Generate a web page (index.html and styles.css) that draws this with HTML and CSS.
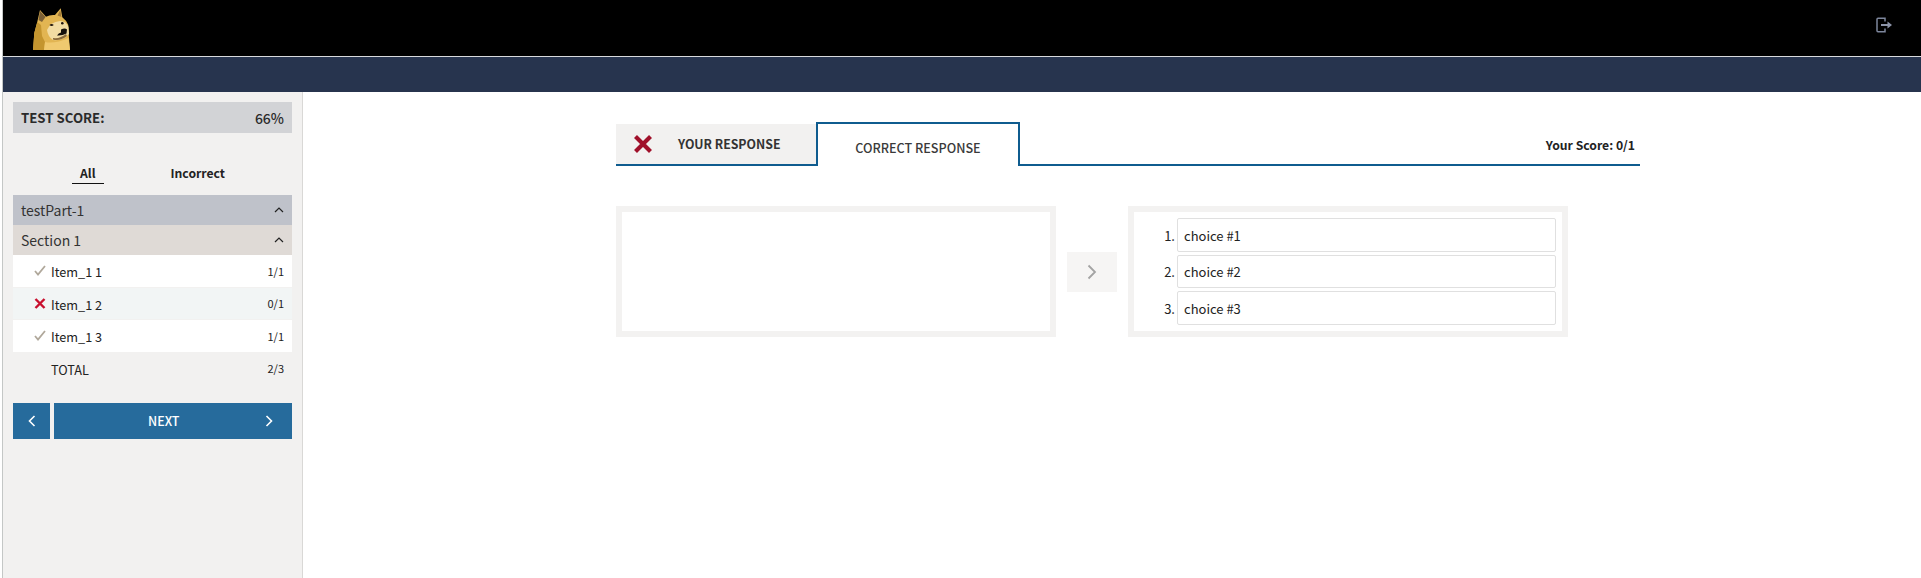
FILE: index.html
```html
<!doctype html>
<html>
<head>
<meta charset="utf-8">
<link rel="stylesheet" href="styles.css">
<title>Test review</title>
</head>
<body>
<header class="topbar">
    <svg class="logo" viewBox="33 8 38 42" width="38" height="42">
        <path d="M33 50 L34.300 33 L37.300 21.700 L40 10 L46 16.700 Q50 14.500 55 15 L60.700 8.300 L62.300 17.300 Q66.500 20.500 68.300 25 L68.600 30 L69 38 L70 50 Z" fill="#e2b552"/>
        <path d="M33 50 L34.300 33 L37.300 22 L41 25 L42 36 L45 42 L44 50 Z" fill="#c4952f"/>
        <path d="M40 11 L45.500 17 L42 22 L38.500 20 Z" fill="#7c6036"/>
        <path d="M60.300 10 L61.500 17 L57.500 15.500 Z" fill="#a27a38"/>
        <path d="M45 42 Q55 44 68.500 38 L70 50 L44 50 Z" fill="#f0c96f"/>
        <path d="M47 30 Q50 22 60 21 Q66 21 68.500 27 L69 34 Q63 41 53 40 Q48 37 47 30 Z" fill="#f2dca3"/>
        <path d="M53 38 Q60 39 66 34 L67 36 Q60 41.500 53 39.500 Z" fill="#8a6a3a"/>
        <path d="M49.500 25 Q51.500 23 53.800 25 Q51.500 27 49.500 25 Z" fill="#1e140c"/>
        <circle cx="62.300" cy="23.300" r="1.300" fill="#1e140c"/>
        <path d="M61 29.500 Q65 27.500 67 29.500 L66.500 33.500 Q62 36 57 35.500 Q58.500 33 61 32.500 Z" fill="#15100c"/>
    </svg>
    <svg class="logout" viewBox="0 0 16 16" width="16" height="16">
        <path d="M9 4.500 V1.200 H2 Q1 1.200 1 2.200 V13.800 Q1 14.800 2 14.800 H9 V11.500" fill="none" stroke="#7d869c" stroke-width="1.500"/>
        <path d="M5 8 H12" stroke="#8d95a9" stroke-width="2"/>
        <path d="M11.500 4.600 L16 8 L11.500 11.400 Z" fill="#8d95a9"/>
    </svg>
</header>
<div class="subbar"></div>

<div class="page">
    <aside class="sidebar">
        <div class="test-score"><span>TEST SCORE:</span><span class="pct">66%</span></div>

        <div class="filters">
            <span class="filter active">All</span>
            <span class="filter">Incorrect</span>
        </div>

        <div class="part-row">testPart-1
            <svg class="caret" viewBox="0 0 10 6" width="10" height="6"><path d="M1 5 L5 1 L9 5" fill="none" stroke="#222" stroke-width="1.200"/></svg>
        </div>
        <div class="section-row">Section 1
            <svg class="caret" viewBox="0 0 10 6" width="10" height="6"><path d="M1 5 L5 1 L9 5" fill="none" stroke="#222" stroke-width="1.200"/></svg>
        </div>

        <div class="item">
            <svg class="mark" viewBox="0 0 12 11" width="12" height="11"><path d="M1 6 L4 9.500 L11 1" fill="none" stroke="#b0a89b" stroke-width="1.800"/></svg>
            <span class="item-name">Item_1 1</span><span class="item-score">1/1</span>
        </div>
        <div class="item wrong">
            <svg class="mark" viewBox="0 0 12 11" width="12" height="11"><path d="M1.500 1 L10.500 10 M10.500 1 L1.500 10" fill="none" stroke="#c8102e" stroke-width="2.400"/></svg>
            <span class="item-name">Item_1 2</span><span class="item-score">0/1</span>
        </div>
        <div class="item">
            <svg class="mark" viewBox="0 0 12 11" width="12" height="11"><path d="M1 6 L4 9.500 L11 1" fill="none" stroke="#b0a89b" stroke-width="1.800"/></svg>
            <span class="item-name">Item_1 3</span><span class="item-score">1/1</span>
        </div>
        <div class="item total">
            <span class="mark"></span>
            <span class="item-name">TOTAL</span><span class="item-score">2/3</span>
        </div>

        <div class="nav-buttons">
            <div class="btn btn-prev">
                <svg viewBox="0 0 8 12" width="8" height="12"><path d="M6.500 1 L1.500 6 L6.500 11" fill="none" stroke="#fff" stroke-width="1.600"/></svg>
            </div>
            <div class="btn btn-next">
                <span>NEXT</span>
                <svg viewBox="0 0 8 12" width="8" height="12"><path d="M1.500 1 L6.500 6 L1.500 11" fill="none" stroke="#fff" stroke-width="1.600"/></svg>
            </div>
        </div>
    </aside>

    <main class="content">
        <div class="tabs">
            <div class="tab tab-yours">
                <svg viewBox="0 0 20 20" width="20" height="20"><path d="M2.500 2.500 L17.500 17.500 M17.500 2.500 L2.500 17.500" fill="none" stroke="#a0102a" stroke-width="4.200"/></svg>
                <span>YOUR RESPONSE</span>
            </div>
            <div class="tab tab-correct">CORRECT RESPONSE</div>
            <div class="your-score">Your Score: 0/1</div>
        </div>

        <div class="order">
            <div class="box"></div>
            <div class="arrow">
                <svg viewBox="0 0 10 16" width="10" height="16"><path d="M1.500 1.500 L8 8 L1.500 14.500" fill="none" stroke="#a3a3a3" stroke-width="1.800"/></svg>
            </div>
            <ol class="box choices">
                <li class="choice"><span class="num">1.</span><span class="choice-text">choice #1</span></li>
                <li class="choice"><span class="num">2.</span><span class="choice-text">choice #2</span></li>
                <li class="choice"><span class="num">3.</span><span class="choice-text">choice #3</span></li>
            </ol>
        </div>
    </main>
</div>
</body>
</html>
```

FILE: styles.css
```css
* {
    box-sizing: border-box;
}
html,
body {
    margin: 0;
    padding: 0;
    height: 100%;
}
body {
    font-family: "Noto Sans CJK SC", "Noto Sans", "Liberation Sans", sans-serif;
    font-size: 14px;
    color: #222;
    background-color: white;
    border-left: 1px solid #c4c7c6;
    margin-left: 2px;
    overflow: hidden;
}

.topbar {
    height: 56px;
    background-color: #000;
    display: flex;
    align-items: flex-start;
    justify-content: space-between;
    padding: 8px 0 0 30px;
}
.logout {
    margin: 9px 29px 0 0;
}
.subbar {
    height: 36px;
    background-color: #27344e;
    border-top: 1px solid #d8dadd;
}

.page {
    display: flex;
    height: 486px;
}

/* sidebar */
.sidebar {
    width: 300px;
    flex: none;
    background-color: #f2f1f0;
    border-right: 1px solid #d9d8d6;
    padding: 10px 10px 0;
}
.test-score {
    height: 31px;
    background-color: #d2d3d6;
    display: flex;
    justify-content: space-between;
    align-items: center;
    padding: 0 8px;
    font-size: 13.200px;
    font-weight: 700;
    color: #2a2a2a;
}
.test-score .pct {
    font-size: 14px;
    font-weight: 500;
}
.filters {
    height: 62px;
    display: flex;
    gap: 59px;
    padding: 32px 0 0 59px;
    font-size: 12.200px;
    font-weight: 700;
}
.filter {
    height: 19px;
    line-height: 17px;
    padding: 0 8px;
}
.filter.active {
    border-bottom: 1px solid #111;
}
.part-row,
.section-row {
    height: 30px;
    display: flex;
    justify-content: space-between;
    align-items: center;
    padding: 0 8px;
    font-size: 14px;
    color: #333;
}
.part-row {
    background-color: #bfc2ca;
}
.section-row {
    background-color: #dfdad6;
}
.item {
    height: 32.500px;
    display: flex;
    align-items: center;
    padding: 0 8px 0 21px;
    font-size: 12.700px;
    background-color: white;
    border-bottom: 1px solid #f2f1f0;
}
.item.wrong {
    background-color: #f2f5f5;
}
.item.total {
    height: 31px;
    background-color: transparent;
    border-bottom: 0;
}
.mark {
    width: 12px;
    margin-right: 5px;
    flex: none;
}
.item-name {
    flex: 1;
    padding-top: 2px;
}
.item-score {
    font-size: 11px;
}
.nav-buttons {
    display: flex;
    gap: 4px;
    margin-top: 19.500px;
}
.btn {
    height: 36px;
    background-color: #266b9c;
    color: white;
    display: flex;
    align-items: center;
    justify-content: center;
}
.btn-prev {
    width: 37px;
}
.btn-next {
    flex: 1;
    justify-content: space-between;
    padding: 0 19px 1px 94px;
    font-size: 12.500px;
    font-weight: 500;
}

/* main area */
.content {
    flex: 1;
    padding: 30px 0 0 313px;
}
.tabs {
    width: 1024px;
    height: 44px;
    display: flex;
    align-items: flex-end;
    border-bottom: 2px solid #0f5c8f;
}
.tab {
    font-weight: 700;
    color: #333;
}
.tab-yours {
    width: 200px;
    height: 40px;
    background-color: #f2f1f0;
    display: flex;
    align-items: center;
    gap: 25px;
    padding-left: 17px;
    font-size: 12.300px;
}
.tab-correct {
    width: 204px;
    height: 44px;
    margin-bottom: -2px;
    background-color: white;
    border: 2px solid #0f5c8f;
    border-bottom: 0;
    padding-top: 3px;
    text-align: center;
    line-height: 42px;
    font-size: 12.600px;
    font-weight: 500;
    color: #3a3a3a;
}
.your-score {
    margin-left: auto;
    padding: 0 5px 10px 0;
    font-size: 12.200px;
    font-weight: 700;
}
.order {
    display: flex;
    align-items: center;
    gap: 11px;
    margin-top: 40px;
}
.box {
    width: 440px;
    height: 131px;
    border: 6px solid #f3f2f1;
    background-color: white;
}
.arrow {
    width: 50px;
    height: 40px;
    background-color: #f6f5f4;
    display: flex;
    align-items: center;
    justify-content: center;
}
.choices {
    list-style: none;
    margin: 0;
    padding: 6px 6px 6px 23px;
    display: flex;
    flex-direction: column;
    gap: 3px;
}
.choice {
    height: 34px;
    display: flex;
    align-items: center;
    font-size: 13px;
}
.choice:nth-child(2) {
    height: 33px;
}
.num {
    width: 18px;
    margin-right: 2px;
    text-align: right;
}
.choice-text {
    flex: 1;
    height: 100%;
    display: flex;
    align-items: center;
    padding-left: 6px;
    border: 1px solid #e0e0e0;
    border-radius: 2px;
}
```
